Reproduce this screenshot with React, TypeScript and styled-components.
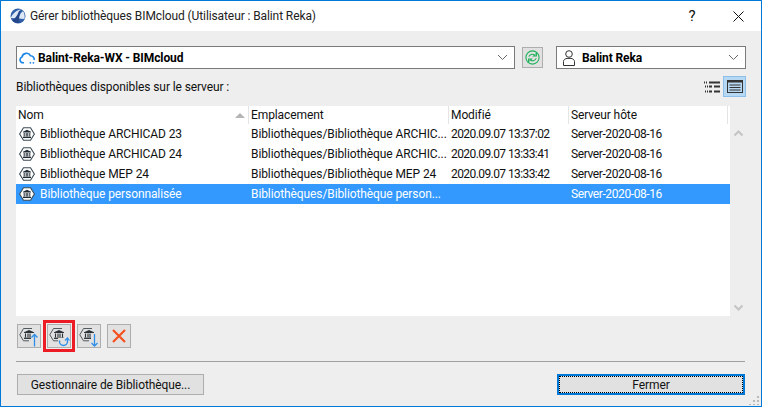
import React from "react";
import styled, { createGlobalStyle } from "styled-components";

const Global = createGlobalStyle`
  html, body { margin: 0; padding: 0; background: #fff; }
  body { font-family: Roboto, "Open Sans", "Liberation Sans", sans-serif; font-size: 12px; letter-spacing: -0.1px; color: #000; }
`;

const Window = styled.div`
  position: relative;
  width: 762px; height: 407px; box-sizing: border-box;
  border: 1px solid #0078d7;
  background: #eeeeee;
  display: flex; flex-direction: column;
  overflow: hidden;
`;
const TitleBar = styled.div`
  height: 30px; flex: none; background: #fff;
  display: flex; align-items: center; padding: 0 0 0 9px;
`;
const Title = styled.div`
  margin-left: 4px; font-size: 12px; color: #222; flex: 1; white-space: nowrap;
`;
const TitleBtn = styled.div`
  width: 46px; height: 30px; display: flex; align-items: center; justify-content: center;
  font-size: 15px; color: #111;
`;
const Body = styled.div`
  flex: 1; display: flex; flex-direction: column; padding: 15px 15px 0 15px;
`;
const TopRow = styled.div`
  display: flex; align-items: center; height: 23px;
`;
const Combo = styled.div<{ $w: number; $pad: number; $gap: number }>`
  width: ${(p) => p.$w}px; height: 23px; box-sizing: border-box;
  border: 1px solid #7a7a7a; background: #fff;
  display: flex; align-items: center; padding-left: ${(p) => p.$pad}px; gap: ${(p) => p.$gap}px;
  font-weight: 700; font-size: 12px; color: #000;
`;
const ComboText = styled.span`flex: 1; white-space: nowrap;`;
const Chevron = styled.svg`margin-right: 6px; flex: none;`;
const SyncBtn = styled.div`
  margin: 0 13px 0 7px; width: 21px; height: 21px; box-sizing: border-box;
  border: 1px solid #adadad; background: #e1e1e1;
  display: flex; align-items: center; justify-content: center;
`;
const LabelRow = styled.div`
  display: flex; align-items: center; justify-content: space-between; height: 21px; margin-top: 7px;
`;
const Label = styled.div`font-size: 12px; color: #111;`;
const ViewIcons = styled.div`display: flex; align-items: center; gap: 0;`;
const ViewBtn = styled.div<{ $active?: boolean }>`
  width: 23px; height: 21px; box-sizing: border-box;
  display: flex; align-items: center; justify-content: center;
  background: ${(p) => (p.$active ? "#b7d8f2" : "transparent")};
  border: 1px solid ${(p) => (p.$active ? "#8cc0ea" : "transparent")};
`;
const ListArea = styled.div`
  margin-top: 9px; height: 210px; display: flex;
`;
const Table = styled.div`
  width: 714px; background: #fff; display: flex; flex-direction: column;
`;
const Header = styled.div`
  display: grid; grid-template-columns: 233px 200px 120px 159px; height: 18px; flex: none;
`;
const HeadCell = styled.div`
  position: relative; padding-left: 2px; font-size: 12px; line-height: 18px; color: #111;
  border-right: 1px solid #e4e4e4; white-space: nowrap;
`;
const SortArrow = styled.div`
  position: absolute; right: 3px; top: 7px; width: 0; height: 0;
  border-left: 5px solid transparent; border-right: 5px solid transparent;
  border-bottom: 5px solid #b4b4b4;
`;
const Row = styled.div<{ $sel?: boolean }>`
  display: grid; grid-template-columns: 233px 200px 120px 1fr; height: 20px; flex: none; align-items: center;
  background: ${(p) => (p.$sel ? "#3399ff" : "#fff")};
  color: ${(p) => (p.$sel ? "#fff" : "#111")};
  font-size: 12px;
`;
const NameCell = styled.div`display: flex; align-items: center; gap: 5px; padding-left: 3px; white-space: nowrap;`;
const Cell = styled.div`padding-left: 2px; white-space: nowrap;`;
const NumCell = styled.div<{ $ls: number }>`
  padding-left: 2px; white-space: nowrap; letter-spacing: ${(p) => p.$ls}px;
`;
const Scroll = styled.div`
  width: 16px; display: flex; flex-direction: column; justify-content: space-between; align-items: center;
  padding: 24px 0 5px;
`;
const ToolRow = styled.div`
  display: flex; align-items: center; gap: 6px; margin-top: 8px; padding-left: 1px;
`;
const ToolBtn = styled.div<{ $marked?: boolean }>`
  width: 24px; height: 24px; box-sizing: border-box; border: 1px solid #adadad; background: #e1e1e1;
  display: flex; align-items: center; justify-content: center; flex: none;
  ${(p) => (p.$marked ? "outline: 3px solid #ed1c24; outline-offset: 1px;" : "")}
`;
const Separator = styled.div`
  margin-top: 13px; height: 1px; background: #a0a0a0; width: 729px;
`;
const BottomRow = styled.div`
  display: flex; justify-content: space-between; margin-top: 12px; padding-left: 1px; width: 729px; box-sizing: border-box;
`;
const PushButton = styled.div`
  width: 187px; height: 21px; box-sizing: border-box; border: 1px solid #adadad; background: #e1e1e1;
  display: flex; align-items: center; justify-content: center; font-size: 12px; color: #111;
`;
const DefaultButton = styled(PushButton)`
  width: 188px; border: 2px solid #0078d7; outline: 1px dotted #000; outline-offset: -3px;
`;
const Grip = styled.svg`position: absolute; right: 1px; bottom: 1px;`;

const LibIcon = () => (
  <svg width="16" height="14" viewBox="0 0 16 14" style={{ flex: "none" }}>
    <path d="M4.5 0.7H11.5L15.4 7L11.5 13.3H4.5L0.6 7Z" fill="#fff" stroke="#3c4a54" strokeWidth="1.1" strokeLinejoin="round" />
    <path d="M4 4.8L8 2.8L12 4.8V5.6H4Z" fill="#1f2a33" />
    <path d="M5.2 6V9.6M7.2 6V9.6M8.8 6V9.6M10.8 6V9.6" stroke="#1f2a33" strokeWidth="1" />
    <path d="M4 10.4H12" stroke="#1f2a33" strokeWidth="1.3" />
  </svg>
);

const ToolLib = ({ kind }: { kind: "up" | "sync" | "down" }) => (
  <svg width="22" height="22" viewBox="0 0 22 22">
    <path d="M14 3.5H5.5L1.8 9.8L5.5 15.8H11" fill="none" stroke="#50595e" strokeWidth="1" />
    <path d="M6 7.2L11 5L16 7.2V8H6Z" fill="#2a3136" />
    <path d="M7.5 8.5V12.5M10 8.5V12.5M12 8.5V12.5M14.5 8.5V12.5" stroke="#2a3136" strokeWidth="1.1" />
    <path d="M6 13.3H16" stroke="#2a3136" strokeWidth="1.3" />
    {kind === "up" && (
      <>
        <rect x="13" y="8" width="7" height="14" fill="#e1e1e1" />
        <path d="M16.5 21.5V9.5M13.5 12.5L16.5 9.5L19.5 12.5" fill="none" stroke="#2f8fe8" strokeWidth="1.3" />
      </>
    )}
    {kind === "down" && (
      <>
        <rect x="13" y="8" width="7" height="14" fill="#e1e1e1" />
        <path d="M16.5 9V21M13.5 18L16.5 21L19.5 18" fill="none" stroke="#2f8fe8" strokeWidth="1.3" />
      </>
    )}
    {kind === "sync" && (
      <>
        <rect x="10" y="13" width="11" height="9" fill="#e1e1e1" />
        <path d="M11.5 15.5V16.5A4 4 0 0 0 19.5 16.5V14" fill="none" stroke="#2f8fe8" strokeWidth="1.4" />
        <path d="M17 15.5L19.5 13L21.5 15.5" fill="none" stroke="#2f8fe8" strokeWidth="1.2" />
      </>
    )}
  </svg>
);

const ChevronIcon = () => (
  <Chevron width="11" height="7" viewBox="0 0 11 7">
    <path d="M1 1L5.5 5.5L10 1" fill="none" stroke="#666" strokeWidth="1" />
  </Chevron>
);

const rows = [
  ["Bibliothèque ARCHICAD 23", "Bibliothèques/Bibliothèque ARCHIC...", "2020.09.07 13:37:02"],
  ["Bibliothèque ARCHICAD 24", "Bibliothèques/Bibliothèque ARCHIC...", "2020.09.07 13:33:41"],
  ["Bibliothèque MEP 24", "Bibliothèques/Bibliothèque MEP 24", "2020.09.07 13:33:42"],
  ["Bibliothèque personnalisée", "Bibliothèques/Bibliothèque person...", ""],
];

export default function App() {
  return (
    <Window>
      <Global />
      <TitleBar>
        <svg width="16" height="16" viewBox="0 0 16 16">
          <circle cx="8" cy="8" r="7.5" fill="#2f5fa8" />
          <path d="M0.8 10C3 5 7 2 11 1.6C9 4 8.5 7 9 9C10 6 11.5 4 13 3.2C14.5 5 15 8 14.5 11" fill="#dce8f5" />
          <path d="M2 12C5 11 7 8 9 3L11 2C9 6 9 10 9.5 14.5C7 15.5 4 14.5 2 12Z" fill="#24478a" />
        </svg>
        <Title>Gérer bibliothèques BIMcloud (Utilisateur : Balint Reka)</Title>
        <TitleBtn>?</TitleBtn>
        <TitleBtn>
          <svg width="11" height="11" viewBox="0 0 11 11">
            <path d="M0.5 0.5L10.5 10.5M10.5 0.5L0.5 10.5" stroke="#111" strokeWidth="1" />
          </svg>
        </TitleBtn>
      </TitleBar>
      <Body>
        <TopRow>
          <Combo $w={499} $pad={2} $gap={3}>
            <svg width="16" height="12" viewBox="0 0 16 12" style={{ flex: "none" }}>
              <path d="M5 10.8H4A3 3 0 0 1 3 5A4.6 4.6 0 0 1 11.6 3.8A3.4 3.4 0 0 1 15 8" fill="none" stroke="#1c86e8" strokeWidth="1.6" />
              <circle cx="14.4" cy="10.8" r="0.9" fill="#1c86e8" />
              <circle cx="11.4" cy="10.8" r="0.9" fill="#1c86e8" />
            </svg>
            <ComboText>Balint-Reka-WX - BIMcloud</ComboText>
            <ChevronIcon />
          </Combo>
          <SyncBtn>
            <svg width="15" height="15" viewBox="0 0 15 15">
              <circle cx="7.5" cy="7.5" r="6.6" fill="none" stroke="#1fb25a" strokeWidth="1.1" />
              <path d="M3.8 6.6C4.6 4.6 7.4 3.4 9.6 5L8.6 6H11.4V3.4L10.4 4.3" fill="none" stroke="#1fb25a" strokeWidth="1.1" />
              <path d="M11.2 8.4C10.4 10.4 7.6 11.6 5.4 10L6.4 9H3.6V11.6L4.6 10.7" fill="none" stroke="#1fb25a" strokeWidth="1.1" />
            </svg>
          </SyncBtn>
          <Combo $w={190} $pad={5} $gap={6}>
            <svg width="14" height="18" viewBox="0 0 14 18" style={{ flex: "none" }}>
              <circle cx="7" cy="5" r="3.3" fill="none" stroke="#333" strokeWidth="1" />
              <path d="M1.5 16.5V12.5C1.5 10.5 3.5 9.6 5 9.4H9C10.5 9.6 12.5 10.5 12.5 12.5V16.5Z" fill="none" stroke="#333" strokeWidth="1" />
            </svg>
            <ComboText>Balint Reka</ComboText>
            <ChevronIcon />
          </Combo>
        </TopRow>
        <LabelRow>
          <Label>Bibliothèques disponibles sur le serveur :</Label>
          <ViewIcons>
            <ViewBtn>
              <svg width="16" height="12" viewBox="0 0 16 12">
                <path d="M0 1.5H4M1 5.5H4M1 10.5H4" stroke="#333" strokeWidth="2" strokeDasharray="1 1" />
                <path d="M5 1.5H16M5 5.5H8M10 5.5H16M5 10.5H8M10 10.5H16" stroke="#333" strokeWidth="2" />
              </svg>
            </ViewBtn>
            <ViewBtn $active>
              <svg width="16" height="13" viewBox="0 0 16 13">
                <rect x="0.5" y="0.5" width="15" height="12" fill="none" stroke="#333" />
                <path d="M0.5 1.5H15.5" stroke="#333" strokeWidth="2" />
                <path d="M2.5 5H13.5M2.5 7.5H13.5M2.5 10H13.5" stroke="#333" />
              </svg>
            </ViewBtn>
          </ViewIcons>
        </LabelRow>
        <ListArea>
          <Table>
            <Header>
              <HeadCell>
                Nom
                <SortArrow />
              </HeadCell>
              <HeadCell>Emplacement</HeadCell>
              <HeadCell>Modifié</HeadCell>
              <HeadCell>Serveur hôte</HeadCell>
            </Header>
            {rows.map((r, i) => (
              <Row key={r[0]} $sel={i === 3}>
                <NameCell>
                  <LibIcon />
                  {r[0]}
                </NameCell>
                <Cell>{r[1]}</Cell>
                <NumCell $ls={-0.58}>{r[2]}</NumCell>
                <NumCell $ls={-0.4}>Server-2020-08-16</NumCell>
              </Row>
            ))}
          </Table>
          <Scroll>
            <svg width="11" height="7" viewBox="0 0 11 7">
              <path d="M1.5 5.5L5.5 1.5L9.5 5.5" fill="none" stroke="#c4c4c4" strokeWidth="2" />
            </svg>
            <svg width="11" height="7" viewBox="0 0 11 7">
              <path d="M1.5 1.5L5.5 5.5L9.5 1.5" fill="none" stroke="#c4c4c4" strokeWidth="2" />
            </svg>
          </Scroll>
        </ListArea>
        <ToolRow>
          <ToolBtn><ToolLib kind="up" /></ToolBtn>
          <ToolBtn $marked><ToolLib kind="sync" /></ToolBtn>
          <ToolBtn><ToolLib kind="down" /></ToolBtn>
          <ToolBtn>
            <svg width="16" height="16" viewBox="0 0 16 16">
              <path d="M2 2L14 14M14 2L2 14" stroke="#f4511e" strokeWidth="2.2" />
            </svg>
          </ToolBtn>
        </ToolRow>
        <Separator />
        <BottomRow>
          <PushButton>Gestionnaire de Bibliothèque...</PushButton>
          <DefaultButton>Fermer</DefaultButton>
        </BottomRow>
      </Body>
      <Grip width="11" height="11" viewBox="0 0 11 11">
        <path d="M8 2h2v2H8zM4 6h2v2H4zM8 6h2v2H8zM0 10h2v1H0zM4 10h2v1H4zM8 10h2v1H8z" fill="#b9b9b9" />
      </Grip>
    </Window>
  );
}
